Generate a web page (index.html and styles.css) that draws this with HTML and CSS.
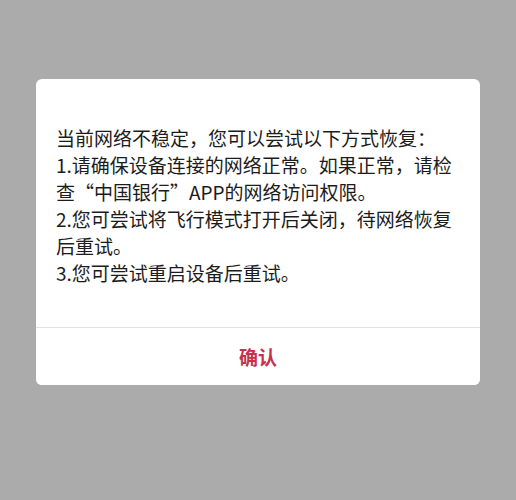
FILE: index.html
```html
<!DOCTYPE html>
<html lang="zh-CN">
<head>
    <meta charset="UTF-8">
    <meta name="viewport" content="width=device-width, initial-scale=1.0">
    <title>网络提示</title>
    <link rel="stylesheet" href="styles.css">
</head>
<body>
    <div class="dialog">
        <div class="dialog-body">
            <p>当前网络不稳定，您可以尝试以下方式恢复：</p>
            <p>1.请确保设备连接的网络正常。如果正常，请检查“中国银行”APP的网络访问权限。</p>
            <p>2.您可尝试将飞行模式打开后关闭，待网络恢复后重试。</p>
            <p>3.您可尝试重启设备后重试。</p>
        </div>
        <button class="dialog-button">确认</button>
    </div>
</body>
</html>
```

FILE: styles.css
```css
body {
    margin: 0;
    padding: 0;
    height: 500px;
    background-color: #ababab;
    font-family: "Noto Sans CJK SC", "Noto Sans", sans-serif;
    overflow: hidden;
}
.dialog {
    width: 444px;
    margin: 79px auto 0;
    background: white;
    border-radius: 6px;
    overflow: hidden;
}
.dialog-body {
    padding: 45px 20px 41px;
    font-size: 19px;
    line-height: 27px;
    color: #1c1c1c;
}
.dialog-body p {
    margin: 0;
}
.dialog-button {
    display: block;
    width: 100%;
    height: 58px;
    border: none;
    border-top: 1px solid #e2e2e2;
    background: white;
    color: #c8304f;
    font-family: inherit;
    font-size: 19px;
    font-weight: bold;
    cursor: pointer;
}
```
